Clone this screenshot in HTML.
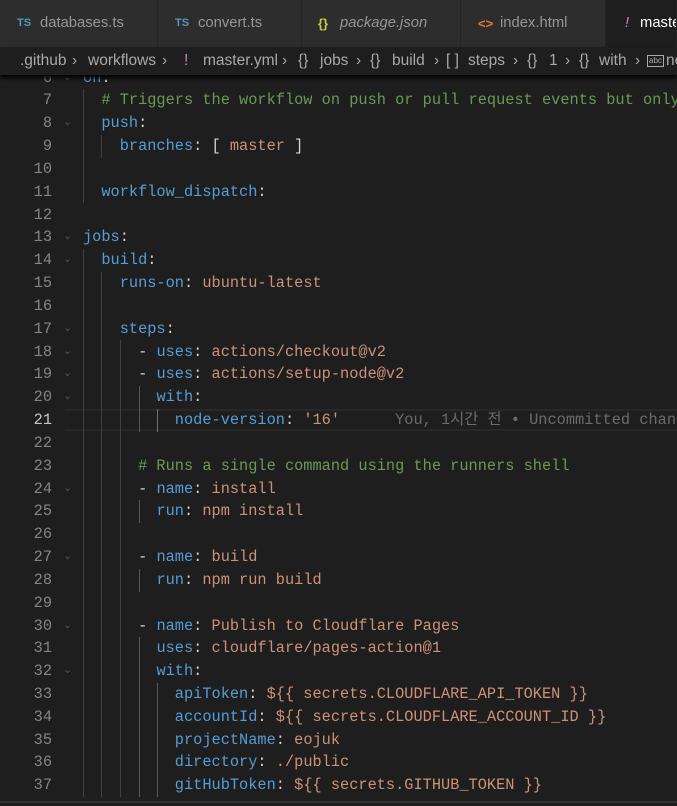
<!DOCTYPE html>
<html><head><meta charset="utf-8"><style>
html,body{margin:0;width:677px;height:806px;overflow:hidden}
body{background:#1e1e1e;font-family:"Liberation Sans",sans-serif;position:relative}
.tabs{position:absolute;top:0;left:0;width:677px;height:47px;background:#252526}
.tab{position:absolute;top:0;height:47px;background:#2d2d2d;color:#969696;font-size:14.8px;line-height:47px;border-right:1px solid #252526;box-sizing:border-box;white-space:nowrap;overflow:hidden}
.tab span{position:absolute;top:0}
.ts{font-weight:bold;font-size:11px;color:#519aba}
.bc{position:absolute;top:47px;left:0;width:677px;height:28px;background:#1e1e1e;color:#a9a9a9;font-size:15.5px;line-height:28px;white-space:nowrap;overflow:hidden;box-shadow:0 3px 4px #000;z-index:5}
.bc span{position:absolute;top:0}
.code{position:absolute;top:66.6px;left:0;width:677px;height:740px;overflow:hidden;font-family:"Liberation Mono",monospace;font-size:15.3px;line-height:22.83px;white-space:pre}
.ln{position:absolute;left:0;width:52px;text-align:right;color:#858585}
.tx{position:absolute;left:83px;color:#d4d4d4}
.k{color:#569cd6}.s{color:#ce9178}.c{color:#6a9955}.g{color:#6b6b6b}
.gd{position:absolute;width:1px;background:#404040}
.ch{position:absolute;left:63px;color:#555;font-size:11px}
</style></head><body>
<div class="tabs">
<div class="tab" style="left:0;width:158px"><span class="ts" style="left:17px">TS</span><span style="left:40px">databases.ts</span></div>
<div class="tab" style="left:158px;width:144px"><span class="ts" style="left:17px">TS</span><span style="left:40px">convert.ts</span></div>
<div class="tab" style="left:302px;width:159px"><span style="left:16px;color:#cbcb41;font-weight:bold;font-size:13px">{}</span><span style="left:38px;font-style:italic">package.json</span></div>
<div class="tab" style="left:461px;width:145px"><span style="left:17px;color:#e37933;font-weight:bold;font-size:13px">&lt;&gt;</span><span style="left:39px">index.html</span></div>
<div class="tab" style="left:606px;width:71px;background:#1e1e1e;color:#fff"><span style="left:19px;color:#c586c0;font-style:italic">!</span><span style="left:34px">master.yml</span></div>
</div>
<div class="bc">
<span style="left:20px">.github</span><span style="left:72px">›</span>
<span style="left:88px">workflows</span><span style="left:162px">›</span>
<span style="left:184px;color:#c586c0">!</span>
<span style="left:203px">master.yml</span><span style="left:282px">›</span>
<span style="left:298px">{}</span><span style="left:320px">jobs</span><span style="left:356px">›</span>
<span style="left:370px">{}</span><span style="left:392px">build</span><span style="left:434px">›</span>
<span style="left:446px">[ ]</span><span style="left:468px">steps</span><span style="left:513px">›</span>
<span style="left:527px">{}</span><span style="left:549px">1</span><span style="left:565px">›</span>
<span style="left:579px">{}</span><span style="left:599px">with</span><span style="left:635px">›</span>
<span style="left:647px;top:8px;line-height:10px;border:1px solid #aaa;font-size:8px;padding:0 1px">abc</span>
<span style="left:666px">ne</span>
</div>

<div style="position:absolute;left:65px;right:0;top:408.6px;height:22.8px;border-top:2px solid #282828;border-bottom:2px solid #282828;box-sizing:border-box"></div>

<div class="gd" style="left:83px;top:89px;height:114px"></div>
<div class="gd" style="left:83px;top:249px;height:548px"></div>
<div class="gd" style="left:101px;top:135px;height:23px"></div>
<div class="gd" style="left:101px;top:272px;height:525px"></div>
<div class="gd" style="left:120px;top:340px;height:457px"></div>
<div class="gd" style="left:139px;top:386px;height:46px;background:#585858"></div>
<div class="gd" style="left:139px;top:500px;height:23px;background:#585858"></div>
<div class="gd" style="left:139px;top:569px;height:23px;background:#585858"></div>
<div class="gd" style="left:139px;top:637px;height:160px;background:#585858"></div>
<div class="gd" style="left:157px;top:409px;height:23px;background:#707070"></div>
<div class="gd" style="left:157px;top:683px;height:114px;background:#585858"></div>

<div class="code">
<div class="ln" style="top:0">6</div><div class="tx" style="top:0"><span class="k">on</span>:</div>
<div class="ln" style="top:22.83px">7</div><div class="tx" style="top:22.83px">  <span class="c"># Triggers the workflow on push or pull request events but only for the master branch</span></div>
<div class="ln" style="top:45.66px">8</div><div class="tx" style="top:45.66px">  <span class="k">push</span>:</div>
<div class="ln" style="top:68.49px">9</div><div class="tx" style="top:68.49px">    <span class="k">branches</span>: [ <span class="s">master</span> ]</div>
<div class="ln" style="top:91.32px">10</div>
<div class="ln" style="top:114.15px">11</div><div class="tx" style="top:114.15px">  <span class="k">workflow_dispatch</span>:</div>
<div class="ln" style="top:136.98px">12</div>
<div class="ln" style="top:159.81px">13</div><div class="tx" style="top:159.81px"><span class="k">jobs</span>:</div>
<div class="ln" style="top:182.64px">14</div><div class="tx" style="top:182.64px">  <span class="k">build</span>:</div>
<div class="ln" style="top:205.47px">15</div><div class="tx" style="top:205.47px">    <span class="k">runs-on</span>: <span class="s">ubuntu-latest</span></div>
<div class="ln" style="top:228.3px">16</div>
<div class="ln" style="top:251.13px">17</div><div class="tx" style="top:251.13px">    <span class="k">steps</span>:</div>
<div class="ln" style="top:273.96px">18</div><div class="tx" style="top:273.96px">      - <span class="k">uses</span>: <span class="s">actions/checkout@v2</span></div>
<div class="ln" style="top:296.79px">19</div><div class="tx" style="top:296.79px">      - <span class="k">uses</span>: <span class="s">actions/setup-node@v2</span></div>
<div class="ln" style="top:319.62px">20</div><div class="tx" style="top:319.62px">        <span class="k">with</span>:</div>
<div class="ln" style="top:342.45px;color:#c6c6c6">21</div><div class="tx" style="top:342.45px">          <span class="k">node-version</span>: <span class="s">'16'</span>      <span class="g" style="font-family:'Liberation Mono','Noto Sans CJK KR',monospace">You, 1시간 전 • Uncommitted changes</span></div>
<div class="ln" style="top:365.28px">22</div>
<div class="ln" style="top:388.11px">23</div><div class="tx" style="top:388.11px">      <span class="c"># Runs a single command using the runners shell</span></div>
<div class="ln" style="top:410.94px">24</div><div class="tx" style="top:410.94px">      - <span class="k">name</span>: <span class="s">install</span></div>
<div class="ln" style="top:433.77px">25</div><div class="tx" style="top:433.77px">        <span class="k">run</span>: <span class="s">npm install</span></div>
<div class="ln" style="top:456.6px">26</div>
<div class="ln" style="top:479.43px">27</div><div class="tx" style="top:479.43px">      - <span class="k">name</span>: <span class="s">build</span></div>
<div class="ln" style="top:502.26px">28</div><div class="tx" style="top:502.26px">        <span class="k">run</span>: <span class="s">npm run build</span></div>
<div class="ln" style="top:525.09px">29</div>
<div class="ln" style="top:547.92px">30</div><div class="tx" style="top:547.92px">      - <span class="k">name</span>: <span class="s">Publish to Cloudflare Pages</span></div>
<div class="ln" style="top:570.75px">31</div><div class="tx" style="top:570.75px">        <span class="k">uses</span>: <span class="s">cloudflare/pages-action@1</span></div>
<div class="ln" style="top:593.58px">32</div><div class="tx" style="top:593.58px">        <span class="k">with</span>:</div>
<div class="ln" style="top:616.41px">33</div><div class="tx" style="top:616.41px">          <span class="k">apiToken</span>: <span class="s">${{ secrets.CLOUDFLARE_API_TOKEN }}</span></div>
<div class="ln" style="top:639.24px">34</div><div class="tx" style="top:639.24px">          <span class="k">accountId</span>: <span class="s">${{ secrets.CLOUDFLARE_ACCOUNT_ID }}</span></div>
<div class="ln" style="top:662.07px">35</div><div class="tx" style="top:662.07px">          <span class="k">projectName</span>: <span class="s">eojuk</span></div>
<div class="ln" style="top:684.9px">36</div><div class="tx" style="top:684.9px">          <span class="k">directory</span>: <span class="s">./public</span></div>
<div class="ln" style="top:707.73px">37</div><div class="tx" style="top:707.73px">          <span class="k">gitHubToken</span>: <span class="s">${{ secrets.GITHUB_TOKEN }}</span></div>
<div class="ln" style="top:730.56px">38</div>
<div class="ch" style="top:45.66px">⌄</div><div class="ch" style="top:182.64px">⌄</div><div class="ch" style="top:296.79px">⌄</div><div class="ch" style="top:319.62px">⌄</div><div class="ch" style="top:410.94px">⌄</div><div class="ch" style="top:547.92px">⌄</div><div class="ch" style="top:593.58px">⌄</div><div class="ch" style="top:159.81px">⌄</div><div class="ch" style="top:251.13px">⌄</div><div class="ch" style="top:273.96px">⌄</div><div class="ch" style="top:479.43px">⌄</div><div class="ch" style="top:0">⌄</div>
</div>
<div style="position:absolute;left:0;top:801px;width:677px;height:5px;background:#1e1e1e;border-top:2px solid #333"></div>
</body></html>
